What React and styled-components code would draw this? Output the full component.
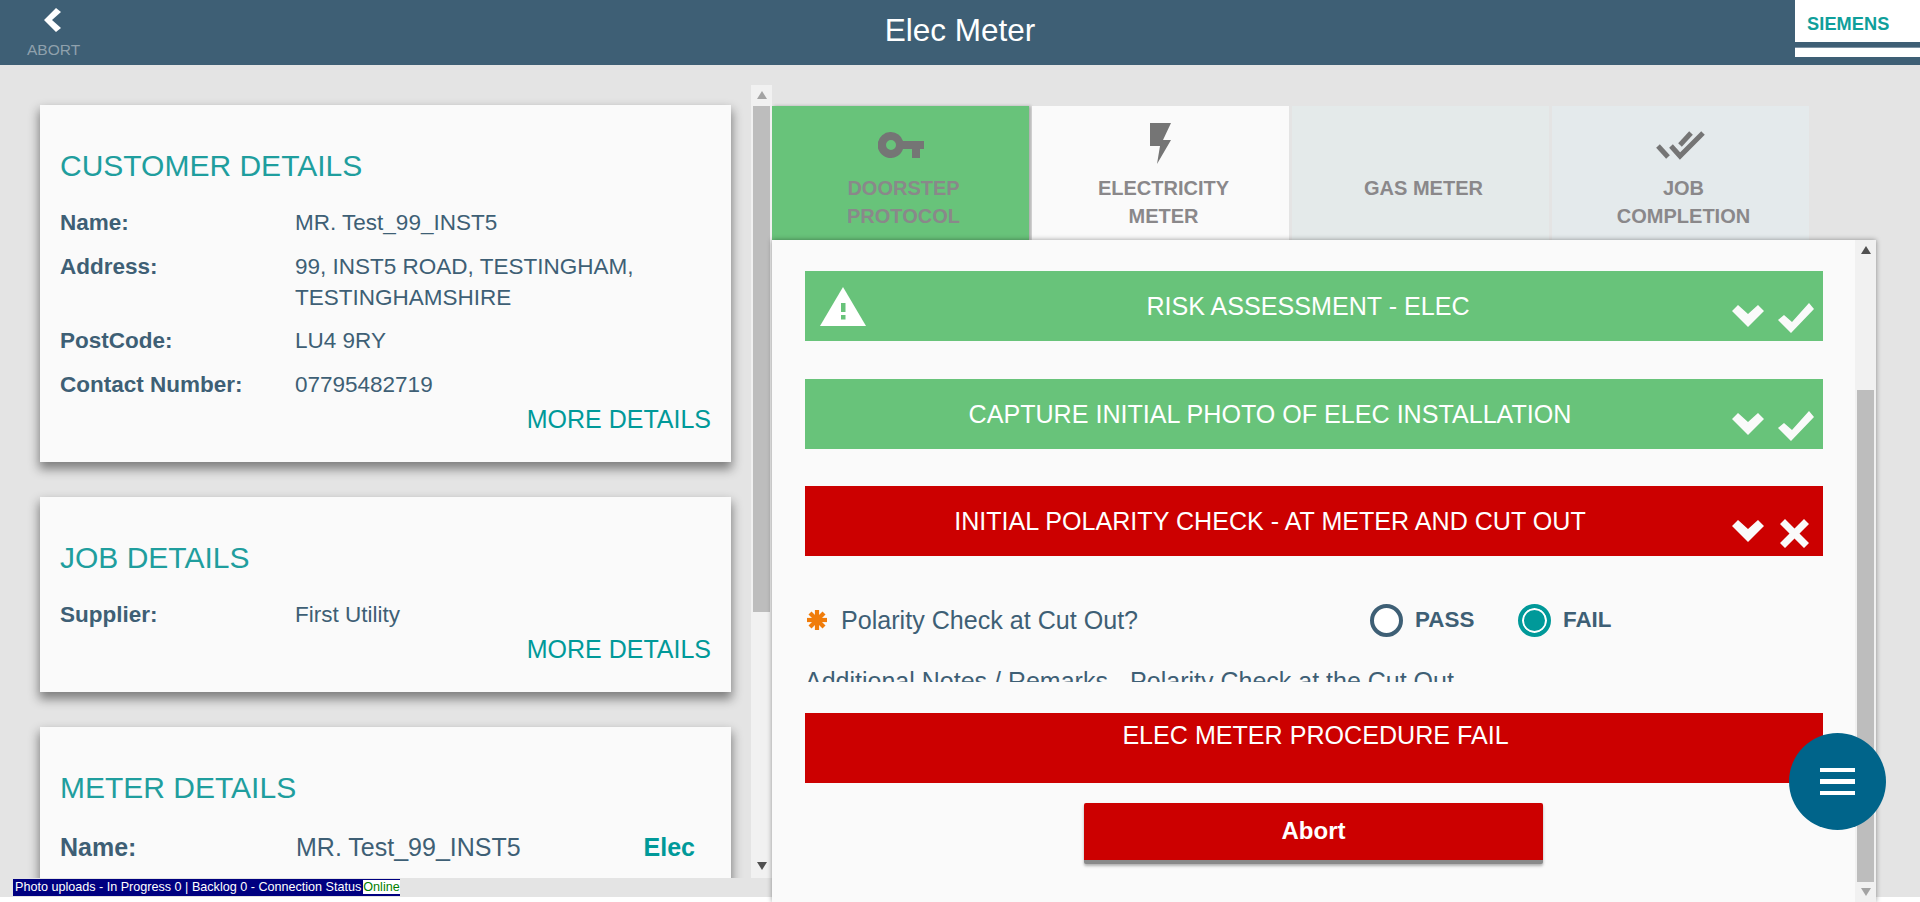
import styled, { createGlobalStyle } from 'styled-components';

const GlobalStyle = createGlobalStyle`
  html, body {
    margin: 0;
    padding: 0;
    background: #fff;
    font-family: "Liberation Sans", Arial, sans-serif;
  }
`;

const Page = styled.div`
  position: relative;
  width: 1920px;
  height: 902px;
  overflow: hidden;
  display: flex;
  flex-direction: column;
`;

const Header = styled.header`
  height: 65px;
  flex: none;
  background: #3e5f75;
  display: grid;
  grid-template-columns: 125px 1fr 125px;
`;

const BackButton = styled.div`
  display: flex;
  flex-direction: column;
  align-items: flex-start;
  padding: 8px 0 0 27px;
  color: #8fa1ad;
  font-size: 15.5px;
  line-height: 18px;

  svg {
    margin: 0 0 9px 17px;
  }
`;

const HeaderTitle = styled.h1`
  margin: 0;
  color: #fff;
  font-size: 31.5px;
  font-weight: 400;
  line-height: 60px;
  text-align: center;
`;

const LogoBox = styled.div`
  height: 57px;
  background: #fff;
  padding: 13px 0 0 12px;
  box-sizing: border-box;
  color: #0f9f9b;
  font-size: 18.2px;
  font-weight: 700;
  letter-spacing: 0.1px;
  line-height: 22px;

  &::after {
    content: '';
    display: block;
    margin: 7px 0 0 -12px;
    height: 5px;
    background: #3e5f75;
    border-bottom: 1px solid #7d93a3;
  }
`;

const Body = styled.main`
  height: 832px;
  flex: none;
  background: #e4e4e4;
  display: flex;
`;

const LeftPane = styled.section`
  width: 772px;
  flex: none;
  height: 793px;
  margin-top: 20px;
  display: flex;
`;

const CardColumn = styled.div`
  flex: 1;
  overflow: hidden;
  padding: 20px 0 0 40px;
  box-sizing: border-box;
`;

const Card = styled.article`
  width: 691px;
  box-sizing: border-box;
  background: #fafafa;
  padding: 40px 20px 26px 20px;
  margin-bottom: 35px;
  box-shadow: 0 6px 10px 1px rgba(0, 0, 0, 0.45);
`;

const CardTitle = styled.h2`
  margin: 0 0 20px;
  color: #1f9e9e;
  font-size: 30px;
  font-weight: 400;
  line-height: 42px;
`;

const InfoRows = styled.div`
  display: flex;
  flex-direction: column;
  gap: 12.5px;
`;

const InfoRow = styled.div`
  display: grid;
  grid-template-columns: ${(p) => (p.$meter ? '236px 1fr auto' : '235px 1fr')};
  margin-top: ${(p) => (p.$meter ? '3px' : '0')};
  color: #3e5f75;
  font-size: ${(p) => (p.$meter ? '25px' : '22.5px')};
  line-height: 31px;
`;

const InfoLabel = styled.div`
  font-weight: 700;
`;

const InfoType = styled.div`
  color: #009999;
  font-weight: 700;
  padding-right: 16px;
`;

const MoreLink = styled.div`
  color: #009999;
  font-size: 25px;
  line-height: 34px;
  text-align: right;
  margin-top: 2px;
`;

const ScrollTrack = styled.div`
  width: ${(p) => p.$width}px;
  flex: none;
  background: #f1f1f1;
  position: relative;
  display: flex;
  flex-direction: column;
  align-items: center;
  box-sizing: border-box;
`;

const ScrollThumb = styled.div`
  width: 17px;
  margin-top: ${(p) => p.$top}px;
  height: ${(p) => p.$height}px;
  background: #bdbdbd;
`;

const ScrollArrow = styled.span`
  position: absolute;
  ${(p) => (p.$down ? `bottom: ${p.$offset}px;` : `top: ${p.$offset}px;`)}
  width: 0;
  height: 0;
  border-left: 5px solid transparent;
  border-right: 5px solid transparent;
  ${(p) => (p.$down ? 'border-top' : 'border-bottom')}: 8px solid ${(p) => (p.$dark ? '#505050' : '#a3a3a3')};
`;

const RightPane = styled.section`
  width: 1104px;
  flex: none;
  padding-top: 41px;
  display: flex;
  flex-direction: column;
`;

const Tabs = styled.nav`
  width: 1037px;
  height: 134px;
  flex: none;
  display: grid;
  grid-template-columns: repeat(4, 257px);
  column-gap: 3px;
`;

const Tab = styled.div`
  background: ${(p) => p.$bg};
  color: #8a888a;
  padding-top: 10px;
  box-sizing: border-box;
  text-align: center;
  font-size: 20px;
  font-weight: 700;
  line-height: 28px;
  box-shadow: ${(p) => (p.$raised ? '2px 0 3px rgba(0, 0, 0, 0.25)' : 'none')};
`;

const TabIcon = styled.div`
  height: 58px;
  display: flex;
  align-items: center;
  justify-content: center;
`;

const TabLabel = styled.div`
  padding-left: 6px;
`;

const Panel = styled.div`
  position: relative;
  height: 662px;
  flex: none;
  display: flex;
  background: #fafafa;
  box-shadow: 0 0 5px rgba(0, 0, 0, 0.4);
`;

const PanelContent = styled.div`
  flex: 1;
  padding: 31px 32px 0 33px;
  min-width: 0;
`;

const Steps = styled.div`
  height: 411px;
  overflow: hidden;
  display: flex;
  flex-direction: column;
  gap: 37.5px;
`;

const Banner = styled.div`
  height: 70px;
  flex: none;
  display: flex;
  align-items: center;
  background: ${(p) => (p.$fail ? '#cc0000' : '#68c37a')};
  color: #fff;
  font-size: 25.1px;
  line-height: 30px;
`;

const BannerTitle = styled.div`
  flex: 1;
  padding-left: 3px;
  text-align: center;
`;

const WarningSlot = styled.div`
  width: 76px;
  flex: none;
  padding-left: 15px;
  box-sizing: border-box;
  display: flex;
`;

const BannerIcons = styled.div`
  width: 91px;
  flex: none;
  align-self: flex-end;
  height: 38px;
  display: flex;
  align-items: flex-start;
  gap: 14px;
  box-sizing: border-box;

  svg:first-child {
    margin-top: 2px;
  }
`;

const CrossSlot = styled.span`
  display: block;
  margin: -1px 0 0 2px;
`;

const AnswerBlock = styled.div`
  flex: none;
  padding-top: 10px;
`;

const Question = styled.div`
  display: flex;
  align-items: center;
  height: 33px;
  padding-left: 2px;
  color: #3e5f75;
  font-size: 25.1px;
`;

const QuestionText = styled.div`
  width: 529px;
  margin-left: 14px;
`;

const RadioOption = styled.div`
  display: flex;
  align-items: center;
  gap: 12px;
  width: 148px;
  font-size: 22.4px;
  font-weight: 700;
`;

const Radio = styled.span`
  width: 33px;
  height: 33px;
  box-sizing: border-box;
  border-radius: 50%;
  border: 4px solid ${(p) => (p.$checked ? '#009999' : '#3e5f75')};
  background: ${(p) => (p.$checked ? '#009999' : '#fff')};
  box-shadow: ${(p) => (p.$checked ? 'inset 0 0 0 2px #fff' : 'none')};
`;

const Notes = styled.div`
  margin-top: 29px;
  color: #3e5f75;
  font-size: 25px;
  line-height: 30px;
`;

const FailBanner = styled.div`
  height: 70px;
  margin-top: 31px;
  padding-left: 3px;
  background: #cc0000;
  color: #fff;
  font-size: 25.1px;
  line-height: 44px;
  text-align: center;
`;

const AbortButton = styled.button`
  display: block;
  width: 459px;
  height: 61px;
  margin: 20px 0 0 279px;
  padding: 0 0 2px;
  border: 0;
  border-bottom: 4px solid #8a8a8a;
  border-radius: 2px;
  background: #cc0000;
  color: #fff;
  font-family: inherit;
  font-size: 24px;
  font-weight: 700;
  box-shadow: 0 2px 3px rgba(0, 0, 0, 0.3);
`;

const Fab = styled.button`
  position: absolute;
  left: 1017px;
  top: 493px;
  width: 97px;
  height: 97px;
  padding: 0;
  border: 0;
  border-radius: 50%;
  background: #00648a;
  display: flex;
  flex-direction: column;
  align-items: center;
  justify-content: center;
  gap: 7px;

  span {
    width: 35px;
    height: 4.5px;
    background: #fff;
  }
`;

const StatusBar = styled.div`
  position: absolute;
  left: 13px;
  top: 879px;
  height: 17px;
  width: 387px;
  box-sizing: border-box;
  padding-left: 2px;
  background: #000080;
  color: #fff;
  font-size: 12.6px;
  line-height: 17px;
  white-space: nowrap;
`;

const StatusOnline = styled.span`
  background: #fff;
  color: #008000;
  margin-left: 2px;
`;

const ChevronLeft = () => (
  <svg width="17" height="24" viewBox="0 0 17 24">
    <polygon fill="#fff" points="12,0 17,4 8,12 17,20 12,24 0,12" />
  </svg>
);

const KeyIcon = () => (
  <svg width="46" height="26" viewBox="0 0 46 26">
    <path
      fill="#757575"
      fillRule="evenodd"
      d="M13 0a13 13 0 0 1 12 9h21v8h-4v9h-8v-9h-9a13 13 0 1 1-12-17zm0 8a5 5 0 1 0 0 10a5 5 0 0 0 0-10z"
    />
  </svg>
);

const BoltIcon = () => (
  <svg width="21" height="41" viewBox="0 0 21 41" style={{ marginTop: -3 }}>
    <polygon fill="#757575" points="0,0 21,0 13,17 21,17 7,41 10,23 0,23" />
  </svg>
);

const DoubleCheckIcon = () => (
  <svg width="52" height="32" viewBox="15 8 52 32">
    <g fill="none" stroke="#757575" strokeWidth="5">
      <path d="M18 25l10 11" />
      <path d="M31 25l9 10 23-23" />
      <path d="M40 24l11-12" />
    </g>
  </svg>
);

const WarningIcon = () => (
  <svg width="46" height="39" viewBox="0 0 46 39">
    <polygon fill="#fff" points="23,0 46,39 0,39" />
    <rect x="21" y="16" width="4.5" height="9" fill="#68c37a" />
    <rect x="21" y="28" width="4.5" height="4.5" fill="#68c37a" />
  </svg>
);

const ChevronDown = () => (
  <svg width="32" height="22" viewBox="0 0 32 22">
    <polygon fill="#fafafa" points="0,6 6,0 16,9 26,0 32,6 16,22" />
  </svg>
);

const CheckIcon = () => (
  <svg width="36" height="30" viewBox="0 0 36 30">
    <polygon fill="#fafafa" points="0,17 6,12 14,19 31,0 36,6 13,30" />
  </svg>
);

const CrossIcon = () => (
  <CrossSlot>
    <svg width="29" height="29" viewBox="0 0 29 29">
      <polygon
        fill="#fafafa"
        points="5,0 14.5,9.5 24,0 29,5 19.5,14.5 29,24 24,29 14.5,19.5 5,29 0,24 9.5,14.5 0,5"
      />
    </svg>
  </CrossSlot>
);

const AsteriskIcon = () => (
  <svg width="20" height="20" viewBox="0 0 20 20">
    <g stroke="#f07c0a" strokeWidth="4.2">
      <path d="M10 0v20" />
      <path d="M0 10h20" />
      <path d="M3 3l14 14" />
      <path d="M17 3L3 17" />
    </g>
  </svg>
);

const tabs = [
  { label: ['DOORSTEP', 'PROTOCOL'], bg: '#68c37a', raised: true, icon: <KeyIcon /> },
  { label: ['ELECTRICITY', 'METER'], bg: '#fafafa', icon: <BoltIcon /> },
  { label: ['GAS METER'], bg: '#e4eaea' },
  { label: ['JOB', 'COMPLETION'], bg: '#e4eaec', icon: <DoubleCheckIcon /> },
];

const StepBanner = ({ title, fail, warning }) => (
  <Banner $fail={fail}>
    {warning && (
      <WarningSlot>
        <WarningIcon />
      </WarningSlot>
    )}
    <BannerTitle>{title}</BannerTitle>
    <BannerIcons>
      <ChevronDown />
      {fail ? <CrossIcon /> : <CheckIcon />}
    </BannerIcons>
  </Banner>
);

export default function App() {
  return (
    <Page>
      <GlobalStyle />
      <Header>
        <BackButton>
          <ChevronLeft />
          ABORT
        </BackButton>
        <HeaderTitle>Elec Meter</HeaderTitle>
        <LogoBox>SIEMENS</LogoBox>
      </Header>
      <Body>
        <LeftPane>
          <CardColumn>
            <Card>
              <CardTitle>CUSTOMER DETAILS</CardTitle>
              <InfoRows>
                <InfoRow>
                  <InfoLabel>Name:</InfoLabel>
                  <div>MR. Test_99_INST5</div>
                </InfoRow>
                <InfoRow>
                  <InfoLabel>Address:</InfoLabel>
                  <div>
                    99, INST5 ROAD, TESTINGHAM,
                    <br />
                    TESTINGHAMSHIRE
                  </div>
                </InfoRow>
                <InfoRow>
                  <InfoLabel>PostCode:</InfoLabel>
                  <div>LU4 9RY</div>
                </InfoRow>
                <InfoRow>
                  <InfoLabel>Contact Number:</InfoLabel>
                  <div>07795482719</div>
                </InfoRow>
              </InfoRows>
              <MoreLink>MORE DETAILS</MoreLink>
            </Card>
            <Card>
              <CardTitle>JOB DETAILS</CardTitle>
              <InfoRows>
                <InfoRow>
                  <InfoLabel>Supplier:</InfoLabel>
                  <div>First Utility</div>
                </InfoRow>
              </InfoRows>
              <MoreLink>MORE DETAILS</MoreLink>
            </Card>
            <Card>
              <CardTitle>METER DETAILS</CardTitle>
              <InfoRows>
                <InfoRow $meter>
                  <InfoLabel>Name:</InfoLabel>
                  <div>MR. Test_99_INST5</div>
                  <InfoType>Elec</InfoType>
                </InfoRow>
              </InfoRows>
            </Card>
          </CardColumn>
          <ScrollTrack $width={21}>
            <ScrollArrow $offset={6} />
            <ScrollThumb $top={21} $height={506} />
            <ScrollArrow $down $dark $offset={8} />
          </ScrollTrack>
        </LeftPane>
        <RightPane>
          <Tabs>
            {tabs.map((tab) => (
              <Tab key={tab.label[0]} $bg={tab.bg} $raised={tab.raised}>
                <TabIcon>{tab.icon}</TabIcon>
                <TabLabel>
                  {tab.label.map((line) => (
                    <div key={line}>{line}</div>
                  ))}
                </TabLabel>
              </Tab>
            ))}
          </Tabs>
          <Panel>
            <PanelContent>
              <Steps>
                <StepBanner title="RISK ASSESSMENT - ELEC" warning />
                <StepBanner title="CAPTURE INITIAL PHOTO OF ELEC INSTALLATION" />
                <StepBanner title="INITIAL POLARITY CHECK - AT METER AND CUT OUT" fail />
                <AnswerBlock>
                  <Question>
                    <AsteriskIcon />
                    <QuestionText>Polarity Check at Cut Out?</QuestionText>
                    <RadioOption>
                      <Radio />
                      PASS
                    </RadioOption>
                    <RadioOption>
                      <Radio $checked />
                      FAIL
                    </RadioOption>
                  </Question>
                  <Notes>Additional Notes / Remarks - Polarity Check at the Cut Out</Notes>
                </AnswerBlock>
              </Steps>
              <FailBanner>ELEC METER PROCEDURE FAIL</FailBanner>
              <AbortButton>Abort</AbortButton>
            </PanelContent>
            <ScrollTrack $width={21}>
              <ScrollArrow $dark $offset={6} />
              <ScrollThumb $top={150} $height={492} />
              <ScrollArrow $down $offset={6} />
            </ScrollTrack>
            <Fab>
              <span />
              <span />
              <span />
            </Fab>
          </Panel>
        </RightPane>
      </Body>
      <StatusBar>
        Photo uploads - In Progress 0 | Backlog 0 - Connection Status
        <StatusOnline>Online</StatusOnline>
      </StatusBar>
    </Page>
  );
}
